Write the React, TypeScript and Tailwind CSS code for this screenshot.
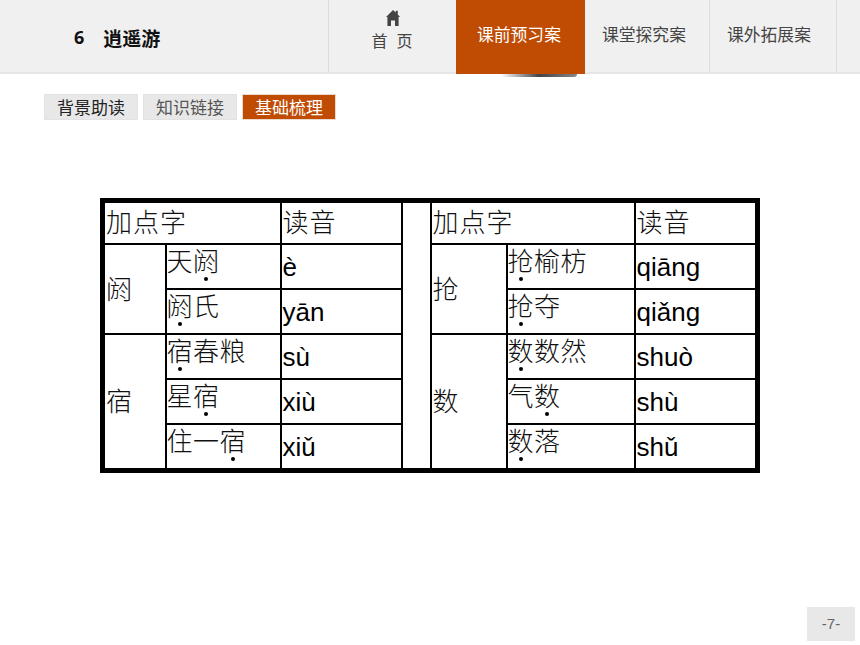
import type { ReactNode } from 'react';

const pinyin = 'font-["Liberation_Sans",sans-serif] text-[26px] leading-none text-black pt-[2px]';

function Dot({ children }: { children: ReactNode }) {
  return (
    <span className="relative inline-block">
      {children}
      <span className="absolute left-1/2 top-[32px] h-[4px] w-[4px] -translate-x-1/2 rounded-full bg-black" />
    </span>
  );
}

function Cell({ children, py, colSpan, rowSpan }: { children?: ReactNode; py?: boolean; colSpan?: number; rowSpan?: number }) {
  return (
    <td colSpan={colSpan} rowSpan={rowSpan} className={`border-2 border-black p-0 pl-[1px] align-middle ${py ? pinyin : ''}`}>
      {children}
    </td>
  );
}

function Head({ children }: { children: ReactNode }) {
  return <div className="mb-[3px] h-[30px] leading-[30px] tracking-[1px]">{children}</div>;
}

function Word({ children }: { children: ReactNode }) {
  return <div className="-ml-[1px] mb-[13px] h-[30px] leading-[30px] tracking-[0.5px]">{children}</div>;
}

function Key({ children }: { children: ReactNode }) {
  return <div className="mb-[2px]">{children}</div>;
}

export default function App() {
  return (
    <div className='relative h-[645px] w-[860px] overflow-hidden bg-white font-["Noto_Sans_CJK_SC","Noto_Sans",sans-serif]'>
      <header className="flex h-[74px] items-stretch border-b-2 border-[#e6e6e6] bg-[#f0f0f0]">
        <div className="flex w-[329px] items-center gap-[19px] border-r border-[#dcdcdc] pl-[74px] pt-[2px] text-[19px] leading-none font-bold text-[#111]">
          <span className='font-["Open_Sans",sans-serif] text-[18px]'>6</span>
          <span>逍遥游</span>
        </div>
        <div className="flex w-[127px] flex-col items-center pt-[10px] text-[#444]">
          <svg viewBox="0 0 14 16" className="h-[16px] w-[14px] fill-[#444]">
            <path d="M7 0 L9.8 2.6 V0.8 H11.8 V4.6 L14 7 H12.6 V16 H9 V10.5 H5 V16 H1.4 V7 H0 Z" />
          </svg>
          <span className="mr-[1px] mt-[1px] flex gap-[9px] text-[16px] leading-[26px]">
            <span>首</span>
            <span>页</span>
          </span>
        </div>
        <div className="relative -mb-[2px] w-[129px] bg-[#c04c04] pl-[21px] pt-[21px] text-[16.8px] leading-[26px] text-white">
          课前预习案
          <span className="absolute bottom-[-3px] left-[45px] h-[3px] w-[76px] rounded-b-full bg-gradient-to-r from-transparent via-[#444] to-[#888] blur-[0.6px]" />
        </div>
        <div className="w-[125px] border-r border-[#dcdcdc] pl-[17px] pt-[21px] text-[16.8px] leading-[26px] text-[#444]">
          课堂探究案
        </div>
        <div className="w-[127px] border-r border-[#dcdcdc] pl-[17px] pt-[21px] text-[16.8px] leading-[26px] text-[#444]">
          课外拓展案
        </div>
      </header>

      <nav className="ml-[44px] mt-[20px] flex gap-[5px] text-[17px] leading-none">
        <div className="flex h-[26px] w-[94px] items-center justify-center border border-[#e2e2e2] bg-[#e8e8e8] pb-[1px] text-[#222]">背景助读</div>
        <div className="flex h-[26px] w-[94px] items-center justify-center border border-[#e2e2e2] bg-[#e8e8e8] pb-[1px] text-[#555]">知识链接</div>
        <div className="flex h-[26px] w-[94px] items-center justify-center border border-[#ead9cd] bg-[#c04c04] pb-[1px] text-white">基础梳理</div>
      </nav>

      <div className="ml-[100px] mt-[78px] w-[660px]">
        <table className="w-[660px] table-fixed border-collapse border-[5px] border-black text-[26px] leading-none font-light text-[#111]">
          <colgroup>
            <col className="w-[63px]" />
            <col className="w-[115px]" />
            <col className="w-[121px]" />
            <col className="w-[29px]" />
            <col className="w-[76px]" />
            <col className="w-[128px]" />
            <col className="w-[123px]" />
          </colgroup>
          <tbody>
            <tr className="h-[43px]">
              <Cell colSpan={2}><Head>加点字</Head></Cell>
              <Cell><Head>读音</Head></Cell>
              <Cell rowSpan={6} />
              <Cell colSpan={2}><Head>加点字</Head></Cell>
              <Cell><Head>读音</Head></Cell>
            </tr>
            <tr className="h-[45px]">
              <Cell rowSpan={2}><Key>阏</Key></Cell>
              <Cell><Word>天<Dot>阏</Dot></Word></Cell>
              <Cell py>è</Cell>
              <Cell rowSpan={2}><Key>抢</Key></Cell>
              <Cell><Word><Dot>抢</Dot>榆枋</Word></Cell>
              <Cell py>qiāng</Cell>
            </tr>
            <tr className="h-[45px]">
              <Cell><Word><Dot>阏</Dot>氏</Word></Cell>
              <Cell py>yān</Cell>
              <Cell><Word><Dot>抢</Dot>夺</Word></Cell>
              <Cell py>qiǎng</Cell>
            </tr>
            <tr className="h-[45px]">
              <Cell rowSpan={3}><Key>宿</Key></Cell>
              <Cell><Word><Dot>宿</Dot>春粮</Word></Cell>
              <Cell py>sù</Cell>
              <Cell rowSpan={3}><Key>数</Key></Cell>
              <Cell><Word><Dot>数</Dot>数然</Word></Cell>
              <Cell py>shuò</Cell>
            </tr>
            <tr className="h-[45px]">
              <Cell><Word>星<Dot>宿</Dot></Word></Cell>
              <Cell py>xiù</Cell>
              <Cell><Word>气<Dot>数</Dot></Word></Cell>
              <Cell py>shù</Cell>
            </tr>
            <tr className="h-[47px]">
              <Cell><Word>住一<Dot>宿</Dot></Word></Cell>
              <Cell py>xiǔ</Cell>
              <Cell><Word><Dot>数</Dot>落</Word></Cell>
              <Cell py>shǔ</Cell>
            </tr>
          </tbody>
        </table>
      </div>

      <div className="absolute bottom-[4px] right-[5px] flex h-[34px] w-[48px] items-center justify-center bg-[#e8e8e8] font-['Liberation_Sans',sans-serif] text-[15px] text-[#666]">
        -7-
      </div>
    </div>
  );
}
